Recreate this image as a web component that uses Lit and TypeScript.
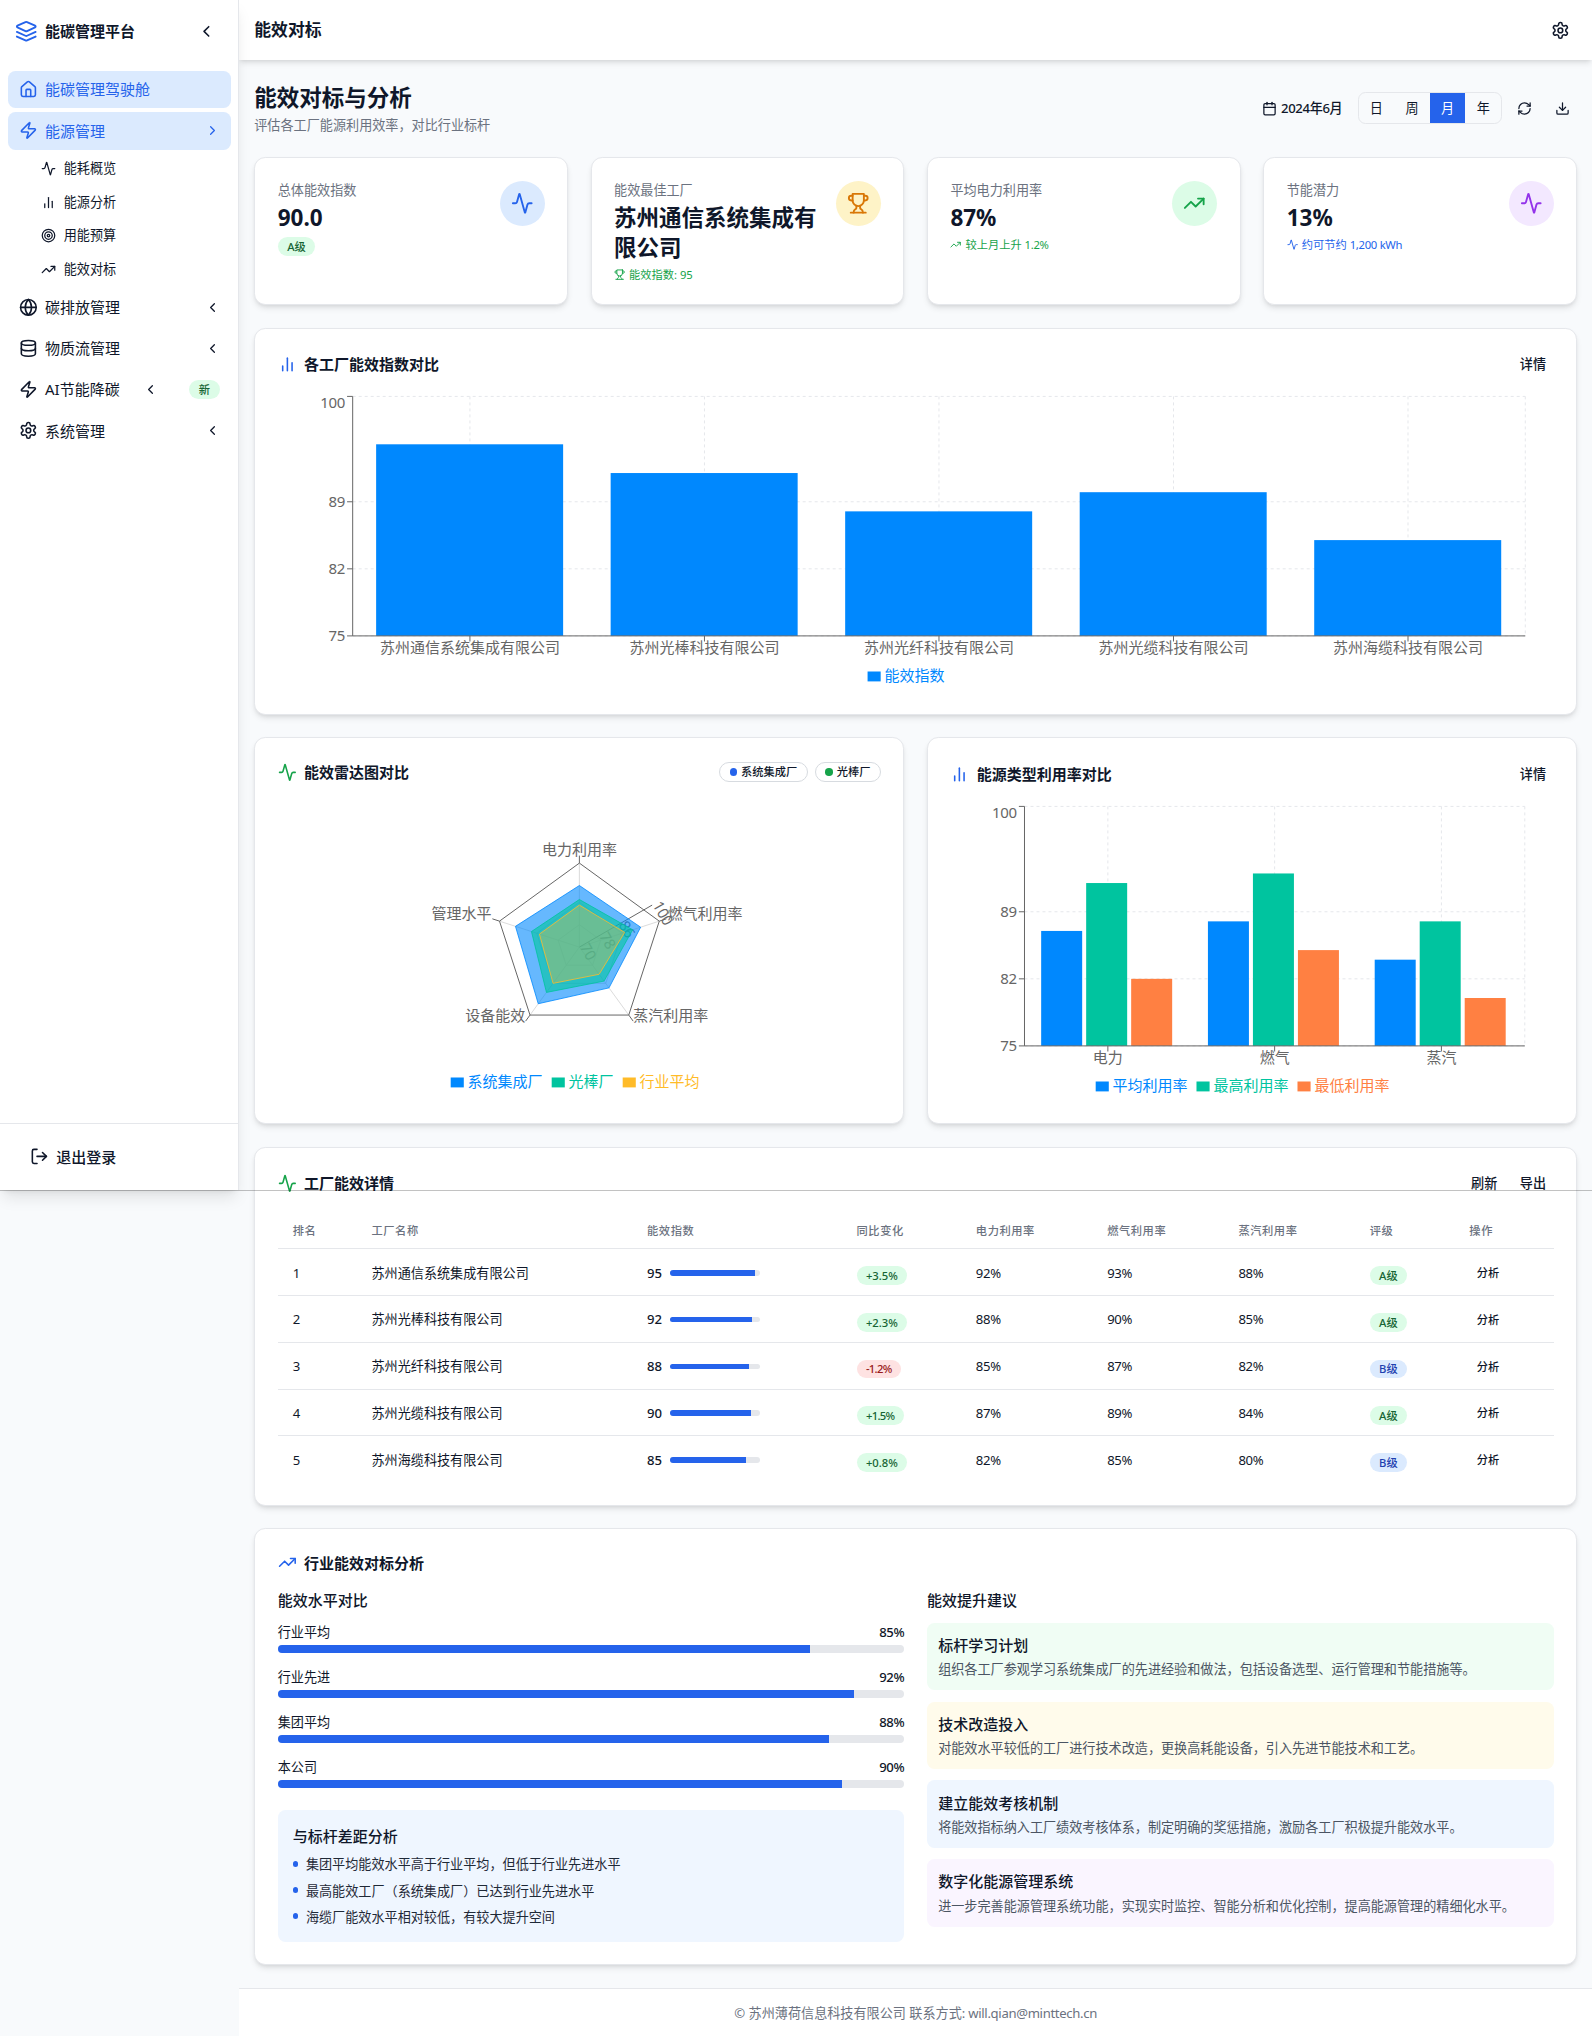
import { LitElement, html, css, svg, nothing } from "lit";
import { customElement } from "lit/decorators.js";

const ICONS: Record<string, ReturnType<typeof svg>> = {
  layers: svg`<path d="m12.83 2.18a2 2 0 0 0-1.66 0L2.6 6.08a1 1 0 0 0 0 1.83l8.58 3.91a2 2 0 0 0 1.66 0l8.58-3.9a1 1 0 0 0 0-1.83Z"/><path d="m22 17.65-9.17 4.16a2 2 0 0 1-1.66 0L2 17.65"/><path d="m22 12.65-9.17 4.16a2 2 0 0 1-1.66 0L2 12.65"/>`,
  home: svg`<path d="M15 21v-8a1 1 0 0 0-1-1h-4a1 1 0 0 0-1 1v8"/><path d="M3 10a2 2 0 0 1 .709-1.528l7-5.999a2 2 0 0 1 2.582 0l7 5.999A2 2 0 0 1 21 10v9a2 2 0 0 1-2 2H5a2 2 0 0 1-2-2z"/>`,
  zap: svg`<path d="M4 14a1 1 0 0 1-.78-1.63l9.9-10.2a.5.5 0 0 1 .86.46l-1.92 6.02A1 1 0 0 0 13 10h7a1 1 0 0 1 .78 1.63l-9.9 10.2a.5.5 0 0 1-.86-.46l1.92-6.02A1 1 0 0 0 11 14z"/>`,
  activity: svg`<path d="M22 12h-2.48a2 2 0 0 0-1.93 1.46l-2.35 8.36a.25.25 0 0 1-.48 0L9.24 2.18a.25.25 0 0 0-.48 0l-2.35 8.36A2 2 0 0 1 4.49 12H2"/>`,
  bars: svg`<line x1="18" x2="18" y1="20" y2="10"/><line x1="12" x2="12" y1="20" y2="4"/><line x1="6" x2="6" y1="20" y2="14"/>`,
  target: svg`<circle cx="12" cy="12" r="10"/><circle cx="12" cy="12" r="6"/><circle cx="12" cy="12" r="2"/>`,
  trend: svg`<polyline points="22 7 13.5 15.5 8.5 10.5 2 17"/><polyline points="16 7 22 7 22 13"/>`,
  globe: svg`<circle cx="12" cy="12" r="10"/><path d="M12 2a14.5 14.5 0 0 0 0 20 14.5 14.5 0 0 0 0-20"/><path d="M2 12h20"/>`,
  database: svg`<ellipse cx="12" cy="5" rx="9" ry="3"/><path d="M3 5V19A9 3 0 0 0 21 19V5"/><path d="M3 12A9 3 0 0 0 21 12"/>`,
  settings: svg`<path d="M12.22 2h-.44a2 2 0 0 0-2 2v.18a2 2 0 0 1-1 1.73l-.43.25a2 2 0 0 1-2 0l-.15-.08a2 2 0 0 0-2.73.73l-.22.38a2 2 0 0 0 .73 2.73l.15.1a2 2 0 0 1 1 1.72v.51a2 2 0 0 1-1 1.74l-.15.09a2 2 0 0 0-.73 2.73l.22.38a2 2 0 0 0 2.73.73l.15-.08a2 2 0 0 1 2 0l.43.25a2 2 0 0 1 1 1.73V20a2 2 0 0 0 2 2h.44a2 2 0 0 0 2-2v-.18a2 2 0 0 1 1-1.73l.43-.25a2 2 0 0 1 2 0l.15.08a2 2 0 0 0 2.73-.73l.22-.39a2 2 0 0 0-.73-2.73l-.15-.08a2 2 0 0 1-1-1.74v-.5a2 2 0 0 1 1-1.74l.15-.09a2 2 0 0 0 .73-2.73l-.22-.38a2 2 0 0 0-2.73-.73l-.15.08a2 2 0 0 1-2 0l-.43-.25a2 2 0 0 1-1-1.73V4a2 2 0 0 0-2-2z"/><circle cx="12" cy="12" r="3"/>`,
  left: svg`<path d="m15 18-6-6 6-6"/>`,
  right: svg`<path d="m9 18 6-6-6-6"/>`,
  calendar: svg`<path d="M8 2v4"/><path d="M16 2v4"/><rect width="18" height="18" x="3" y="4" rx="2"/><path d="M3 10h18"/>`,
  refresh: svg`<path d="M3 12a9 9 0 0 1 9-9 9.75 9.75 0 0 1 6.74 2.74L21 8"/><path d="M21 3v5h-5"/><path d="M21 12a9 9 0 0 1-9 9 9.75 9.75 0 0 1-6.74-2.74L3 16"/><path d="M8 16H3v5"/>`,
  download: svg`<path d="M21 15v4a2 2 0 0 1-2 2H5a2 2 0 0 1-2-2v-4"/><polyline points="7 10 12 15 17 10"/><line x1="12" x2="12" y1="15" y2="3"/>`,
  trophy: svg`<path d="M6 9H4.5a2.5 2.5 0 0 1 0-5H6"/><path d="M18 9h1.5a2.5 2.5 0 0 0 0-5H18"/><path d="M4 22h16"/><path d="M10 14.66V17c0 .55-.47.98-.97 1.21C7.85 18.75 7 20.24 7 22"/><path d="M14 14.66V17c0 .55.47.98.97 1.21C16.15 18.75 17 20.24 17 22"/><path d="M18 2H6v7a6 6 0 0 0 12 0V2Z"/>`,
  logout: svg`<path d="M9 21H5a2 2 0 0 1-2-2V5a2 2 0 0 1 2-2h4"/><polyline points="16 17 21 12 16 7"/><line x1="21" x2="9" y1="12" y2="12"/>`,
};

const icon = (name: string, size = "i4", tone = "") =>
  html`<svg class="icon ${size} ${tone}" viewBox="0 0 24 24">${ICONS[name]}</svg>`;

const SUBNAV = [
  ["activity", "能耗概览"],
  ["bars", "能源分析"],
  ["target", "用能预算"],
  ["trend", "能效对标"],
];

const STATS = [
  { label: "总体能效指数", value: "90.0", badge: "A级", icon: "activity", tone: "blue" },
  { label: "能效最佳工厂", value: "苏州通信系统集成有限公司", note: "能效指数: 95", noteIcon: "trophy", noteTone: "t-green", icon: "trophy", tone: "amber" },
  { label: "平均电力利用率", value: "87%", note: "较上月上升 1.2%", noteIcon: "trend", noteTone: "t-green", icon: "trend", tone: "green" },
  { label: "节能潜力", value: "13%", note: "约可节约 1,200 kWh", noteIcon: "activity", noteTone: "t-blue", icon: "activity", tone: "purple" },
];

const ROWS = [
  { name: "苏州通信系统集成有限公司", score: 95, change: "+3.5%", rates: [92, 93, 88], grade: "A" },
  { name: "苏州光棒科技有限公司", score: 92, change: "+2.3%", rates: [88, 90, 85], grade: "A" },
  { name: "苏州光纤科技有限公司", score: 88, change: "-1.2%", rates: [85, 87, 82], grade: "B" },
  { name: "苏州光缆科技有限公司", score: 90, change: "+1.5%", rates: [87, 89, 84], grade: "A" },
  { name: "苏州海缆科技有限公司", score: 85, change: "+0.8%", rates: [82, 85, 80], grade: "B" },
];

const LEVELS: [string, number][] = [["行业平均", 85], ["行业先进", 92], ["集团平均", 88], ["本公司", 90]];

const GAPS = [
  "集团平均能效水平高于行业平均，但低于行业先进水平",
  "最高能效工厂（系统集成厂）已达到行业先进水平",
  "海缆厂能效水平相对较低，有较大提升空间",
];

const TIPS = [
  ["tip-green", "标杆学习计划", "组织各工厂参观学习系统集成厂的先进经验和做法，包括设备选型、运行管理和节能措施等。"],
  ["tip-amber", "技术改造投入", "对能效水平较低的工厂进行技术改造，更换高耗能设备，引入先进节能技术和工艺。"],
  ["tip-blue", "建立能效考核机制", "将能效指标纳入工厂绩效考核体系，制定明确的奖惩措施，激励各工厂积极提升能效水平。"],
  ["tip-purple", "数字化能源管理系统", "进一步完善能源管理系统功能，实现实时监控、智能分析和优化控制，提高能源管理的精细化水平。"],
];

interface Series { name: string; color: string; values: number[] }
interface BarSpec {
  width: number; left: number; right: number;
  labels: string[]; series: Series[];
  barWidth: number; barGap: number; legendX: number[];
}

const INDEX_CHART: BarSpec = {
  width: 1275, left: 74.3, right: 1246.9,
  labels: ROWS.map((r) => r.name),
  series: [{ name: "能效指数", color: "#0088fe", values: ROWS.map((r) => r.score) }],
  barWidth: 187, barGap: 0, legendX: [589.2],
};

const ENERGY_CHART: BarSpec = {
  width: 602.75, left: 74.3, right: 574.6,
  labels: ["电力", "燃气", "蒸汽"],
  series: [
    { name: "平均利用率", color: "#0088fe", values: [87, 88, 84] },
    { name: "最高利用率", color: "#00c49f", values: [92, 93, 88] },
    { name: "最低利用率", color: "#ff8042", values: [82, 85, 80] },
  ],
  barWidth: 41, barGap: 4, legendX: [145.5, 246.3, 347.3],
};

const legend = (series: { name: string; color: string }[], xs: number[]) =>
  series.map((s, i) => svg`
    <rect x=${xs[i]} y="280.5" width="13.1" height="9.9" fill=${s.color}/>
    <text x=${xs[i] + 16.9} y="289.6" fill=${s.color}>${s.name}</text>`);

const barChart = (c: BarSpec) => {
  const top = 5.4;
  const bottom = 244.9;
  const y = (v: number) => bottom - ((v - 75) / 25) * (bottom - top);
  const band = (c.right - c.left) / c.labels.length;
  const ticks = [75, 82, 89, 100];
  return html`<svg class="chart" viewBox="0 0 ${c.width} 300">
    <g class="grid">
      ${ticks.map((t) => svg`<line x1=${c.left} x2=${c.right} y1=${y(t)} y2=${y(t)}/>`)}
      ${c.labels.map((_, i) => svg`<line x1=${c.left + band * (i + 0.5)} x2=${c.left + band * (i + 0.5)} y1=${top} y2=${bottom}/>`)}
      <line x1=${c.right} x2=${c.right} y1=${top} y2=${bottom}></line>
    </g>
    ${c.series.map((s, si) => s.values.map((v, i) => svg`
      <rect x=${c.left + band * i + band * 0.1 + si * (c.barWidth + c.barGap)} y=${y(v)} width=${c.barWidth} height=${bottom - y(v)} fill=${s.color}/>`))}
    <g class="axis">
      <path d="M${c.left} ${top}V${bottom}H${c.right}"></path>
      ${ticks.map((t) => svg`<path d="M${c.left - 5.6} ${y(t)}H${c.left}"/>`)}
      ${c.labels.map((_, i) => svg`<path d="M${c.left + band * (i + 0.5)} ${bottom}v5.6"/>`)}
    </g>
    ${ticks.map((t) => svg`<text class="num" text-anchor="end" x=${c.left - 7.8} y=${t === 100 ? 17.4 : y(t) + 5.4}>${t}</text>`)}
    ${c.labels.map((l, i) => svg`<text text-anchor="middle" x=${c.left + band * (i + 0.5)} y=${bottom + 17.2}>${l}</text>`)}
    ${legend(c.series, c.legendX)}
  </svg>`;
};

const RADAR = [
  { name: "系统集成厂", color: "#0088fe", opacity: 0.6, values: [92, 93, 88, 95, 94] },
  { name: "光棒厂", color: "#00c49f", opacity: 0.6, values: [87, 90, 85, 90, 88] },
  { name: "行业平均", color: "#ffbb28", opacity: 0.3, values: [85, 87, 82, 86, 85] },
];

const radarChart = () => {
  const cx = 301.2, cy = 150.1, R = 84;
  const at = (r: number, deg: number) => [cx + r * Math.cos((deg * Math.PI) / 180), cy - r * Math.sin((deg * Math.PI) / 180)];
  const angles = [90, 18, -54, -126, 162];
  const scale = (v: number) => ((v - 70) / 30) * R;
  const poly = (rs: number[]) => rs.map((r, i) => at(r, angles[i]).join(",")).join(" ");
  const names: [string, string, number, number][] = [
    ["电力利用率", "middle", cx, 58.2], ["燃气利用率", "start", 389.2, 121.8],
    ["蒸汽利用率", "start", 355.1, 224.2], ["设备能效", "end", 247.2, 224.2], ["管理水平", "end", 213.4, 121.8],
  ];
  return html`<svg class="chart" viewBox="0 0 602.75 300">
    <g class="web">
      ${[8, 16].map((v) => svg`<polygon points=${poly(angles.map(() => (v / 30) * R))}/>`)}
      ${angles.map((a) => svg`<path d="M${cx} ${cy}L${at(R, a).join(" ")}"/>`)}
    </g>
    <g class="axis">
      <polygon points=${poly(angles.map(() => R))}></polygon>
      ${angles.map((a) => svg`<path d="M${at(R, a).join(" ")}L${at(R + 7.5, a).join(" ")}"/>`)}
      <path d="M${cx} ${cy}L${at(R, 30).join(" ")}"></path>
    </g>
    ${names.map(([t, anchor, x, y]) => svg`<text text-anchor=${anchor} x=${x} y=${y}>${t}</text>`)}
    ${[70, 78, 86, 100].map((v) => {
      const [x, y] = at(scale(v), 30);
      return svg`<text class="num" x=${x} y=${y} transform="rotate(60 ${x} ${y})">${v}</text>`;
    })}
    ${RADAR.map((s) => svg`<polygon points=${poly(s.values.map(scale))} fill=${s.color} fill-opacity=${s.opacity} stroke=${s.color} stroke-opacity="0.8" stroke-width="1"/>`)}
    ${legend(RADAR, [172.5, 273.5, 344.5])}
  </svg>`;
};

@customElement("app-root")
export class AppRoot extends LitElement {
  static styles = css`
    :host {
      display: block;
      font-family: "Noto Sans", "Noto Sans CJK SC", sans-serif;
      font-size: 15px;
      line-height: 22.5px;
      color: #0f172a;
    }
    * { box-sizing: border-box; }
    .shell { position: relative; display: flex; align-items: flex-start; height: 2036px; background: #f8fafc; overflow: hidden; }
    .fold { position: absolute; left: 0; right: 0; top: 1190px; height: 1px; background: rgba(0, 0, 0, 0.24); z-index: 5; }
    .icon { flex: none; display: block; fill: none; stroke: currentColor; stroke-width: 2; stroke-linecap: round; stroke-linejoin: round; }
    .i3 { width: 11.25px; height: 11.25px; }
    .i4 { width: 15px; height: 15px; }
    .i5 { width: 18.75px; height: 18.75px; }
    .i6 { width: 22.5px; height: 22.5px; }
    .t-blue { color: #2563eb; }
    .t-green { color: #16a34a; }
    .medium { font-weight: 500; }
    .num { letter-spacing: -0.025em; }
    .tight { letter-spacing: -0.06em; }

    .sidebar { position: relative; z-index: 2; flex: none; display: flex; flex-direction: column; width: 239.25px; height: 1190px; background: #fff; border-right: 1px solid #e5e7eb; box-shadow: 0 10px 15px -3px rgba(0, 0, 0, 0.1), 0 4px 6px -4px rgba(0, 0, 0, 0.1); }
    .brand { display: flex; align-items: center; height: 63.25px; padding: 0 15px; gap: 7.5px; font-weight: 700; }
    .brand-name { flex: 1; }
    .icon-btn { display: flex; align-items: center; justify-content: center; width: 33.75px; height: 33.75px; }
    .nav { display: flex; flex-direction: column; gap: 3.75px; flex: 1; padding: 7.5px; }
    .nav-item { display: flex; align-items: center; justify-content: space-between; height: 37.5px; padding: 0 11.25px; border-radius: 7.5px; }
    .nav-main { display: flex; align-items: center; gap: 7.5px; }
    .active { background: #dbeafe; color: #2563eb; }
    .subnav { display: flex; flex-direction: column; gap: 3.75px; padding-left: 22.5px; font-size: 13.125px; line-height: 18.75px; }
    .sub-item { display: flex; align-items: center; gap: 7.5px; height: 30px; padding: 0 11.25px; }
    .logout { border-top: 1px solid #e5e7eb; height: 67.5px; padding: 0 30px; display: flex; align-items: center; gap: 7.5px; font-weight: 500; }

    .badge { display: inline-flex; align-items: center; height: 18.75px; padding: 0 9.375px; border-radius: 10px; font-size: 11.25px; line-height: 15px; font-weight: 500; }
    .b-green { background: #dcfce7; color: #166534; }
    .b-red { background: #fee2e2; color: #991b1b; }
    .b-blue { background: #dbeafe; color: #1e40af; }
    .new { margin-left: 7.5px; }

    .page { flex: 1; min-width: 0; }
    .topbar { position: relative; z-index: 1; display: flex; align-items: center; justify-content: space-between; height: 60px; padding: 0 15px; background: #fff; font-size: 16.875px; font-weight: 600; box-shadow: 0 4px 6px -1px rgba(0, 0, 0, 0.1), 0 2px 4px -2px rgba(0, 0, 0, 0.1); }
    .topbar-title { padding-top: 1px; }
    .content { display: flex; flex-direction: column; gap: 22.5px; padding: 22px 15px 22.5px; }
    .heading { display: flex; align-items: center; justify-content: space-between; height: 52.5px; }
    .title { margin: 0; font-size: 22.5px; line-height: 32px; font-weight: 700; }
    .subtitle { margin-top: 1.75px; font-size: 13.125px; line-height: 18.75px; color: #6b7280; }
    .controls { display: flex; align-items: center; gap: 7.5px; font-size: 13.125px; font-weight: 500; }
    .date { display: flex; align-items: center; gap: 3.75px; padding: 0 7.6px; }
    .segments { display: flex; border: 1px solid #e5e7eb; border-radius: 7.5px; overflow: hidden; font-weight: 400; }
    .segment { padding: 0 11.25px; line-height: 30px; height: 30px; }
    .segment-on { background: #2563eb; color: #fff; }
    .small-btn { display: flex; align-items: center; justify-content: center; width: 30px; height: 30px; }

    .card { background: #fff; border: 1px solid #e5e7eb; border-radius: 11.25px; padding: 22.5px; box-shadow: 0 4px 6px -1px rgba(0, 0, 0, 0.1), 0 2px 4px -2px rgba(0, 0, 0, 0.1); }
    .stats { display: grid; grid-template-columns: repeat(4, 1fr); gap: 22.5px; }
    .stat { display: flex; justify-content: space-between; align-items: flex-start; height: 148.25px; gap: 11px; }
    .stat-label { font-size: 13.125px; line-height: 18.75px; color: #6b7280; }
    .stat-value { margin: 3.75px 0; font-size: 22.5px; line-height: 30px; font-weight: 700; }
    .stat-body { min-width: 0; }
    .stat-badge { display: flex; width: fit-content; }
    .note { display: flex; align-items: center; gap: 3.75px; font-size: 11.25px; line-height: 15px; }
    .disc { flex: none; display: flex; align-items: center; justify-content: center; width: 45px; height: 45px; border-radius: 50%; }
    .blue { background: #dbeafe; color: #2563eb; }
    .amber { background: #fef3c7; color: #d97706; }
    .green { background: #dcfce7; color: #16a34a; }
    .purple { background: #f3e8ff; color: #9333ea; }

    .card-head { display: flex; align-items: center; justify-content: space-between; height: 26.25px; margin-bottom: 13.75px; }
    .head-low { height: 22.5px; }
    .card-title { display: flex; align-items: center; gap: 7.5px; font-weight: 600; }
    .links { display: flex; gap: 22.5px; padding: 0 7.5px; font-size: 13.125px; font-weight: 500; }
    .pair { display: grid; grid-template-columns: 1fr 1fr; gap: 22.5px; }
    .pills { display: flex; gap: 7.5px; }
    .pill { display: flex; align-items: center; gap: 3.75px; height: 20.75px; padding: 0 9.375px; border: 1px solid #d7dbe0; border-radius: 11px; font-size: 11.25px; font-weight: 500; }
    .dot { width: 7.5px; height: 7.5px; border-radius: 50%; }
    .dot-blue { background: #2563eb; }
    .dot-green { background: #16a34a; }

    .chart { display: block; width: 100%; height: 300px; overflow: visible; font-size: 15px; fill: #666; }
    .grid line { stroke: #e5e7eb; stroke-dasharray: 3 3; }
    .axis path, .axis polygon { stroke: #666; fill: none; }
    .web path, .web polygon { stroke: #ccc; stroke-opacity: 0.7; fill: none; }

    .table { width: 100%; border-collapse: collapse; table-layout: fixed; font-size: 13.125px; line-height: 18.75px; }
    .table th { height: 38.5px; padding: 3.5px 15px 0; text-align: left; font-size: 11.25px; font-weight: 500; letter-spacing: 0.5625px; color: #6b7280; border-bottom: 1px solid #e5e7eb; }
    .table td { height: 46.75px; padding: 1.5px 15px 0; border-bottom: 1px solid #e5e7eb; }
    .table tr:last-child td { border-bottom: 0; height: 46.25px; }
    .table .badge { vertical-align: -5px; }
    .c1 { width: 78.7px; } .c2 { width: 275.6px; } .c3 { width: 209.5px; } .c4 { width: 119.3px; }
    .c5 { width: 131.3px; } .c8 { width: 99.6px; }
    .score { display: flex; align-items: center; gap: 7.5px; font-weight: 500; }
    .track { overflow: hidden; background: #e5e7eb; border-radius: 4px; }
    .track-sm { width: 90px; height: 5.625px; }
    .track-lg { height: 7.5px; }
    .fill { height: 100%; background: #2563eb; }
    .act { padding-left: 7.5px; font-size: 11.25px; font-weight: 500; }

    .analysis { margin-top: 15px; }
    .section-title { height: 22.5px; font-weight: 500; margin-bottom: 11.25px; }
    .levels { display: flex; flex-direction: column; gap: 15px; }
    .level-row { display: flex; justify-content: space-between; font-size: 13.125px; line-height: 18.75px; margin-bottom: 3.75px; }
    .gap-box { margin-top: 22.5px; padding: 15px; border-radius: 7.5px; background: #eff6ff; }
    .gap-title { font-weight: 500; margin-bottom: 7.5px; }
    .gaps { display: flex; flex-direction: column; gap: 7.5px; font-size: 13.125px; line-height: 18.75px; color: #1f2937; }
    .gap-item { display: flex; gap: 7.5px; }
    .bullet { flex: none; width: 5.625px; height: 5.625px; margin-top: 5.625px; border-radius: 50%; background: #2563eb; }
    .tips { display: flex; flex-direction: column; gap: 11.25px; }
    .tip { height: 67.5px; padding: 11.25px; border-radius: 7.5px; }
    .tip-title { font-weight: 500; }
    .tip-text { margin-top: 3.75px; font-size: 13.125px; line-height: 18.75px; color: #4b5563; }
    .tip-green { background: #f0fdf4; }
    .tip-amber { background: #fffbeb; }
    .tip-blue { background: #eff6ff; }
    .tip-purple { background: #faf5ff; }

    .footer { height: 51px; padding-bottom: 1.5px; border-top: 1px solid #e5e7eb; background: #fff; display: flex; align-items: center; justify-content: center; gap: 3px; font-size: 13.125px; color: #6b7280; }
  `;

  private navItem(name: string, label: string, badge = "") {
    return html`<div class="nav-item">
      <span class="nav-main">${icon(name, "i5")}${label}</span>
      ${icon("left")}
      ${badge ? html`<span class="badge b-green new">${badge}</span>` : nothing}
    </div>`;
  }

  private sidebar() {
    return html`<aside class="sidebar">
      <div class="brand">
        ${icon("layers", "i6", "t-blue")}<span class="brand-name">能碳管理平台</span>
        <span class="icon-btn">${icon("left", "i5")}</span>
      </div>
      <nav class="nav">
        <div class="nav-item active"><span class="nav-main">${icon("home", "i5")}能碳管理驾驶舱</span></div>
        <div class="nav-item active"><span class="nav-main">${icon("zap", "i5")}能源管理</span>${icon("right")}</div>
        <div class="subnav">
          ${SUBNAV.map(([i, label]) => html`<div class="sub-item">${icon(i)}${label}</div>`)}
        </div>
        ${this.navItem("globe", "碳排放管理")}
        ${this.navItem("database", "物质流管理")}
        ${this.navItem("zap", "AI节能降碳", "新")}
        ${this.navItem("settings", "系统管理")}
      </nav>
      <div class="logout">${icon("logout", "i5")}退出登录</div>
    </aside>`;
  }

  private head(name: string, tone: string, title: string, links: string[]) {
    return html`<div class="card-head">
      <div class="card-title">${icon(name, "i5", tone)}${title}</div>
      <div class="links">${links.map((l) => html`<span>${l}</span>`)}</div>
    </div>`;
  }

  private stats() {
    return html`<div class="stats">${STATS.map((s) => html`
      <div class="card stat">
        <div class="stat-body">
          <div class="stat-label">${s.label}</div>
          <div class="stat-value">${s.value}</div>
          ${s.badge
            ? html`<span class="badge stat-badge b-green">${s.badge}</span>`
            : html`<div class="note ${s.noteTone}">${icon(s.noteIcon!, "i3")}<span>${s.note!.split(" ")[0]} <span class="num">${s.note!.split(" ").slice(1).join(" ")}</span></span></div>`}
        </div>
        <div class="disc ${s.tone}">${icon(s.icon, "i6")}</div>
      </div>`)}</div>`;
  }

  private table() {
    return html`<table class="table">
      <thead><tr>
        <th class="c1">排名</th><th class="c2">工厂名称</th><th class="c3">能效指数</th><th class="c4">同比变化</th>
        <th class="c5">电力利用率</th><th class="c5">燃气利用率</th><th class="c5">蒸汽利用率</th><th class="c8">评级</th><th>操作</th>
      </tr></thead>
      <tbody>${ROWS.map((r, i) => html`<tr>
        <td>${i + 1}</td>
        <td>${r.name}</td>
        <td><div class="score">${r.score}<div class="track track-sm"><div class="fill" style="width:${r.score}%"></div></div></div></td>
        <td><span class="badge ${r.change.startsWith("+") ? "b-green" : "b-red"} ${r.change.includes("1") ? "tight" : ""}">${r.change}</span></td>
        ${r.rates.map((v) => html`<td class="num">${v}%</td>`)}
        <td><span class="badge ${r.grade === "A" ? "b-green" : "b-blue"}">${r.grade}级</span></td>
        <td><span class="act">分析</span></td>
      </tr>`)}</tbody>
    </table>`;
  }

  private analysis() {
    return html`<section class="card">
      <div class="card-title">${icon("trend", "i5", "t-blue")}行业能效对标分析</div>
      <div class="pair analysis">
        <div>
          <div class="section-title">能效水平对比</div>
          <div class="levels">${LEVELS.map(([n, v]) => html`<div>
            <div class="level-row"><span>${n}</span><span class="medium num">${v}%</span></div>
            <div class="track track-lg"><div class="fill" style="width:${v}%"></div></div>
          </div>`)}</div>
          <div class="gap-box">
            <div class="gap-title">与标杆差距分析</div>
            <div class="gaps">${GAPS.map((g) => html`<div class="gap-item"><span class="bullet"></span>${g}</div>`)}</div>
          </div>
        </div>
        <div>
          <div class="section-title">能效提升建议</div>
          <div class="tips">${TIPS.map(([tone, t, d]) => html`<div class="tip ${tone}">
            <div class="tip-title">${t}</div><div class="tip-text">${d}</div>
          </div>`)}</div>
        </div>
      </div>
    </section>`;
  }

  render() {
    return html`<div class="shell">
      ${this.sidebar()}
      <div class="page">
        <header class="topbar"><span class="topbar-title">能效对标</span><span class="icon-btn">${icon("settings", "i5")}</span></header>
        <main class="content">
          <div class="heading">
            <div>
              <h1 class="title">能效对标与分析</h1>
              <div class="subtitle">评估各工厂能源利用效率，对比行业标杆</div>
            </div>
            <div class="controls">
              <span class="date">${icon("calendar")}<span class="num">2024年6月</span></span>
              <div class="segments">${["日", "周", "月", "年"].map((s) => html`<span class="segment ${s === "月" ? "segment-on" : ""}">${s}</span>`)}</div>
              <span class="small-btn">${icon("refresh")}</span>
              <span class="small-btn">${icon("download")}</span>
            </div>
          </div>
          ${this.stats()}
          <section class="card">
            ${this.head("bars", "t-blue", "各工厂能效指数对比", ["详情"])}
            ${barChart(INDEX_CHART)}
          </section>
          <div class="pair">
            <section class="card">
              <div class="card-head head-low">
                <div class="card-title">${icon("activity", "i5", "t-green")}能效雷达图对比</div>
                <div class="pills">
                  <span class="pill"><span class="dot dot-blue"></span>系统集成厂</span>
                  <span class="pill"><span class="dot dot-green"></span>光棒厂</span>
                </div>
              </div>
              ${radarChart()}
            </section>
            <section class="card">
              ${this.head("bars", "t-blue", "能源类型利用率对比", ["详情"])}
              ${barChart(ENERGY_CHART)}
            </section>
          </div>
          <section class="card">
            ${this.head("activity", "t-green", "工厂能效详情", ["刷新", "导出"])}
            ${this.table()}
          </section>
          ${this.analysis()}
        </main>
        <footer class="footer"><span>© 苏州薄荷信息科技有限公司 联系方式:</span><span class="num">will.qian@minttech.cn</span></footer>
      </div>
      <div class="fold"></div>
    </div>`;
  }
}
